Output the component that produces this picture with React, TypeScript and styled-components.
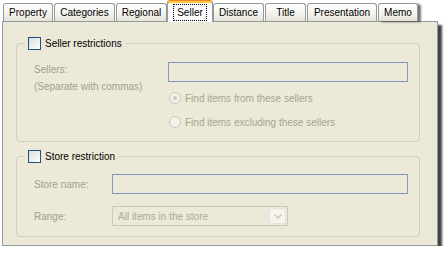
import styled, { createGlobalStyle } from "styled-components";

const GlobalStyle = createGlobalStyle`
  html, body {
    margin: 0;
    background: #fff;
  }
  body {
    font-family: "Liberation Sans", Arial, sans-serif;
    font-size: 10px;
    color: #000;
  }
`;

const Window = styled.div`
  padding-left: 2px;
  width: 446px;
`;

const TabStrip = styled.div`
  display: flex;
  align-items: flex-end;
  height: 21px;
  padding-left: 1px;
`;

const Tab = styled.div<{ $w: number; $active?: boolean }>`
  box-sizing: border-box;
  width: ${(p) => p.$w}px;
  height: ${(p) => (p.$active ? 22 : 18)}px;
  margin: ${(p) => (p.$active ? "0 0 -1px -1px" : "0 1px 0 0")};
  border: 1px solid #919b9c;
  border-bottom: none;
  border-radius: 3px 3px 0 0;
  background: ${(p) =>
    p.$active ? "#fcfcfe" : "linear-gradient(#ffffff, #f4f3ee 55%, #e4e2d8)"};
  ${(p) =>
    p.$active &&
    `
    border-top-color: #e68b2c;
    box-shadow: inset 0 2px 0 #ffc83c;
    position: relative;
    z-index: 1;
  `}
  display: flex;
  align-items: center;
  justify-content: center;
  padding-top: ${(p) => (p.$active ? 1 : 0)}px;
  white-space: nowrap;

  &:last-child {
    box-shadow: 3px 1px 2px rgba(30, 30, 30, 0.6);
  }
`;

const FocusText = styled.span`
  border: 1px dotted #000;
  padding: 2px 3px;
  line-height: 11px;
`;

const Panel = styled.div`
  box-sizing: border-box;
  width: 436px;
  height: 225px;
  border: 1px solid #919b9c;
  background: #ece9d8;
  box-shadow: 4px 4px 2px rgba(20, 20, 20, 0.8);
  padding: 15px 17px 0 13px;
  display: flex;
  flex-direction: column;
  gap: 8px;
`;

const Group = styled.fieldset`
  margin: 0;
  padding: 0;
  min-width: 0;
  border: 1px solid #d0d0bf;
  border-radius: 4px;
`;

const Legend = styled.legend`
  margin-left: 8px;
  padding: 0 3px;
  display: flex;
  align-items: center;
  gap: 4px;
  height: 13px;
  line-height: 13px;
`;

const CheckBox = styled.span`
  box-sizing: border-box;
  width: 13px;
  height: 13px;
  border: 1px solid #1c5180;
  background: linear-gradient(135deg, #dcdcd7, #ffffff);
`;

const SellerBody = styled.div`
  display: flex;
  padding: 12px 11px 11px 17px;
`;

const MultiLabel = styled.div`
  width: 134px;
  flex: none;
  line-height: 17px;
  margin-top: -1px;
  color: #a29e8d;
`;

const Column = styled.div`
  flex: 1;
  display: flex;
  flex-direction: column;
`;

const TextBox = styled.div`
  box-sizing: border-box;
  height: 20px;
  border: 1px solid #7f9db9;
`;

const RadioRow = styled.div`
  display: flex;
  align-items: center;
  gap: 4px;
  height: 16px;
  margin-top: 8px;
  padding-left: 1px;
  color: #a8a493;
`;

const Radio = styled.span<{ $checked?: boolean }>`
  box-sizing: border-box;
  width: 12px;
  height: 12px;
  border-radius: 50%;
  border: 1px solid #cac8bb;
  background: #f2f1ea;
  display: flex;
  align-items: center;
  justify-content: center;
  &::after {
    content: "";
    width: 4px;
    height: 4px;
    border-radius: 50%;
    background: ${(p) => (p.$checked ? "#cac8bb" : "transparent")};
  }
`;

const StoreBody = styled.div`
  display: grid;
  grid-template-columns: 78px 1fr;
  row-gap: 12px;
  align-items: center;
  padding: 11px 11px 10px 17px;
`;

const Label = styled.div`
  color: #a29e8d;
`;

const Select = styled.div`
  box-sizing: border-box;
  width: 176px;
  height: 20px;
  border: 1px solid #cbc8b9;
  display: flex;
  align-items: center;
  padding: 1px;
  color: #aca899;
`;

const SelectText = styled.span`
  flex: 1;
  padding-left: 4px;
`;

const SelectButton = styled.span`
  box-sizing: border-box;
  width: 17px;
  height: 100%;
  background: #f5f4ee;
  border: 1px solid #e6e4da;
  display: flex;
  align-items: center;
  justify-content: center;
`;

const tabs = [
  { name: "Property", w: 50 },
  { name: "Categories", w: 61 },
  { name: "Regional", w: 51 },
  { name: "Seller", w: 46, active: true },
  { name: "Distance", w: 51 },
  { name: "Title", w: 41 },
  { name: "Presentation", w: 70 },
  { name: "Memo", w: 40 },
];

export default function App() {
  return (
    <Window>
      <GlobalStyle />
      <TabStrip>
        {tabs.map((t) => (
          <Tab key={t.name} $w={t.w} $active={t.active}>
            {t.active ? <FocusText>{t.name}</FocusText> : t.name}
          </Tab>
        ))}
      </TabStrip>
      <Panel>
        <Group>
          <Legend>
            <CheckBox />
            Seller restrictions
          </Legend>
          <SellerBody>
            <MultiLabel>
              Sellers:
              <br />
              (Separate with commas)
            </MultiLabel>
            <Column>
              <TextBox />
              <RadioRow>
                <Radio $checked />
                Find items from these sellers
              </RadioRow>
              <RadioRow>
                <Radio />
                Find items excluding these sellers
              </RadioRow>
            </Column>
          </SellerBody>
        </Group>
        <Group>
          <Legend>
            <CheckBox />
            Store restriction
          </Legend>
          <StoreBody>
            <Label>Store name:</Label>
            <TextBox />
            <Label>Range:</Label>
            <Select>
              <SelectText>All items in the store</SelectText>
              <SelectButton>
                <svg width="8" height="5" viewBox="0 0 8 5">
                  <polyline
                    points="0.5,0.5 4,4 7.5,0.5"
                    fill="none"
                    stroke="#c9c7ba"
                    strokeWidth="1.3"
                  />
                </svg>
              </SelectButton>
            </Select>
          </StoreBody>
        </Group>
      </Panel>
    </Window>
  );
}
